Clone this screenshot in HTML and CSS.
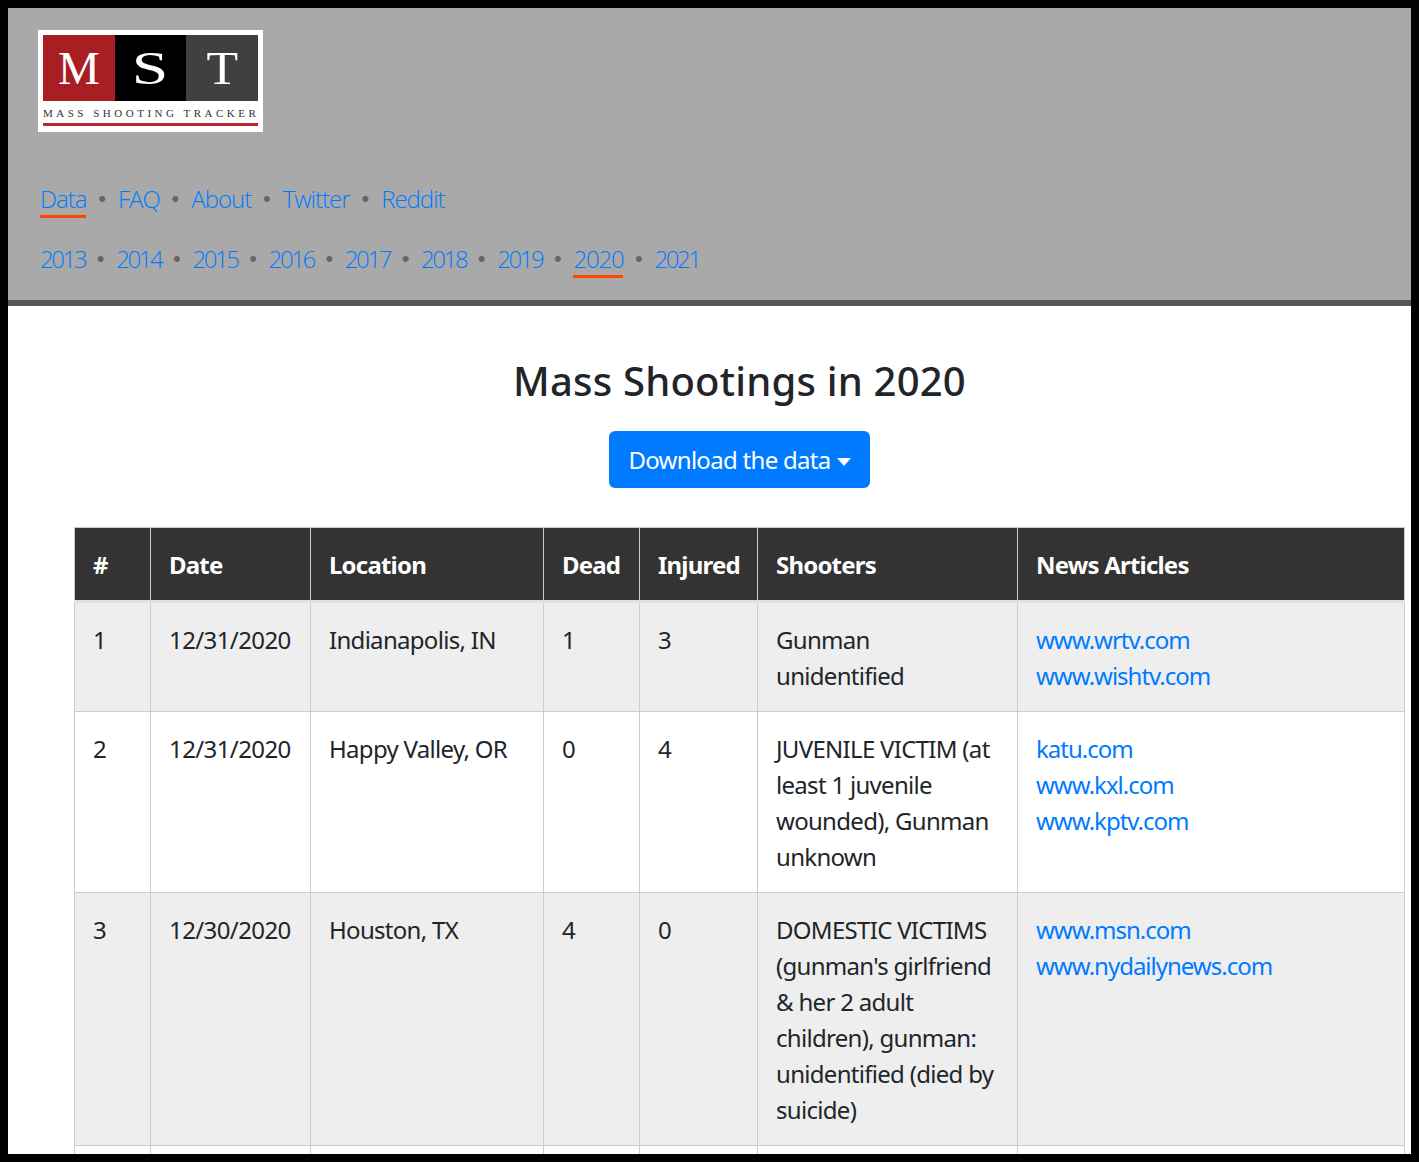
FILE: index.html
```html
<!DOCTYPE html>
<html>

<head>
    <meta charset="UTF-8">
    <title>Mass Shootings in 2020</title>
    <link rel="stylesheet" href="styles.css">
</head>

<body>
    <div class="frame">
        <header class="site-header">
            <div class="logo">
                <div class="logo-blocks">
                    <div class="logo-m"><span>M</span></div>
                    <div class="logo-s"><span>S</span></div>
                    <div class="logo-t"><span>T</span></div>
                </div>
                <div class="logo-name">MASS SHOOTING TRACKER</div>
                <div class="logo-rule"></div>
            </div>
            <nav class="nav-row nav-main">
                <a class="active" href="#">Data</a><i>•</i>
                <a href="#">FAQ</a><i>•</i>
                <a href="#">About</a><i>•</i>
                <a href="#">Twitter</a><i>•</i>
                <a href="#">Reddit</a>
            </nav>
            <nav class="nav-row nav-years">
                <a href="#">2013</a><i>•</i>
                <a href="#">2014</a><i>•</i>
                <a href="#">2015</a><i>•</i>
                <a href="#">2016</a><i>•</i>
                <a href="#">2017</a><i>•</i>
                <a href="#">2018</a><i>•</i>
                <a href="#">2019</a><i>•</i>
                <a class="active" href="#">2020</a><i>•</i>
                <a href="#">2021</a>
            </nav>
        </header>
        <main class="content">
            <h1>Mass Shootings in 2020</h1>
            <div class="download">
                <button class="btn-download">Download the data<span class="caret"></span></button>
            </div>
            <table class="shootings">
                <colgroup>
                    <col class="col-num">
                    <col class="col-date">
                    <col class="col-location">
                    <col class="col-dead">
                    <col class="col-injured">
                    <col class="col-shooters">
                    <col class="col-news">
                </colgroup>
                <thead>
                    <tr>
                        <th>#</th>
                        <th>Date</th>
                        <th>Location</th>
                        <th>Dead</th>
                        <th>Injured</th>
                        <th>Shooters</th>
                        <th>News Articles</th>
                    </tr>
                </thead>
                <tbody>
                    <tr>
                        <td>1</td>
                        <td>12/31/2020</td>
                        <td class="location">Indianapolis, IN</td>
                        <td>1</td>
                        <td>3</td>
                        <td class="shooters">Gunman unidentified</td>
                        <td class="news"><a href="#">www.wrtv.com</a><br><a href="#">www.wishtv.com</a></td>
                    </tr>
                    <tr>
                        <td>2</td>
                        <td>12/31/2020</td>
                        <td class="location">Happy Valley, OR</td>
                        <td>0</td>
                        <td>4</td>
                        <td class="shooters">JUVENILE VICTIM (at least 1 juvenile wounded), Gunman unknown</td>
                        <td class="news"><a href="#">katu.com</a><br><a href="#">www.kxl.com</a><br><a href="#">www.kptv.com</a></td>
                    </tr>
                    <tr>
                        <td>3</td>
                        <td>12/30/2020</td>
                        <td class="location">Houston, TX</td>
                        <td>4</td>
                        <td>0</td>
                        <td class="shooters">DOMESTIC VICTIMS (gunman's girlfriend &amp; her 2 adult children), gunman: unidentified (died by suicide)</td>
                        <td class="news"><a href="#">www.msn.com</a><br><a href="#">www.nydailynews.com</a></td>
                    </tr>
                    <tr>
                        <td></td>
                        <td></td>
                        <td></td>
                        <td></td>
                        <td></td>
                        <td></td>
                        <td></td>
                    </tr>
                </tbody>
            </table>
        </main>
    </div>
</body>

</html>
```

FILE: styles.css
```css
* {
    box-sizing: border-box;
}

body {
    margin: 0;
    font-family: "Noto Sans", sans-serif;
    font-size: 24px;
    line-height: 36px;
    color: #212529;
}

a {
    color: #007bff;
    text-decoration: none;
}

.frame {
    height: 1162px;
    border: 8px solid #000;
    overflow: hidden;
    background-color: #fff;
}

.site-header {
    height: 298px;
    padding: 22px 0 0 30px;
    background-color: #a9a9a9;
    border-bottom: 6px solid #555;
}

.logo {
    width: 225px;
    height: 102px;
    padding: 5px;
    background-color: #fff;
}

.logo-blocks {
    display: flex;
    height: 66px;
    font-family: "Liberation Serif", serif;
    font-size: 47px;
    line-height: 67px;
    color: #fff;
    text-align: center;
}

.logo-blocks div {
    flex: 1;
}

.logo-blocks span {
    display: inline-block;
}

.logo-m {
    background-color: #a91e23;
}

.logo-s {
    background-color: #000;
}

.logo-s span {
    transform: scaleX(1.4);
}

.logo-t {
    background-color: #404040;
}

.logo-t span {
    transform: scaleX(1.1);
}

.logo-name {
    margin-top: 5px;
    font-family: "Liberation Serif", serif;
    font-size: 11px;
    line-height: 15px;
    letter-spacing: 3.5px;
    white-space: nowrap;
    color: #333;
}

.logo-rule {
    height: 3px;
    margin-top: 2px;
    background-color: #b8282e;
}

.nav-row {
    display: flex;
    margin-left: 2px;
    height: 36px;
    font-family: "Open Sans", sans-serif;
    font-weight: 300;
}

.nav-main {
    margin-top: 49px;
}

.nav-years {
    margin-top: 24px;
}

.nav-row a {
    position: relative;
    letter-spacing: -1px;
}

.nav-years a {
    letter-spacing: -2.4px;
}

.nav-years a.active {
    letter-spacing: -1.2px;
}

.nav-row a.active::after {
    content: "";
    position: absolute;
    left: 0;
    right: 0;
    bottom: -1px;
    height: 3px;
    background-color: #ff4500;
}

.nav-row i {
    width: 31.5px;
    font-family: "Liberation Sans", sans-serif;
    font-style: normal;
    font-size: 22px;
    text-align: center;
    color: #666;
}

.nav-years i {
    width: 31px;
}

.content {
    padding: 0 6px 0 66px;
}

h1 {
    margin: 48px 0 0;
    font-size: 40px;
    line-height: 54px;
    font-weight: 500;
    letter-spacing: 0.2px;
    text-align: center;
}

.download {
    margin-top: 23px;
    text-align: center;
}

.btn-download {
    width: 261px;
    height: 57px;
    padding: 0;
    border: 0;
    border-radius: 6px;
    font-family: inherit;
    font-size: 24px;
    letter-spacing: -0.7px;
    color: #fff;
    background-color: #007bff;
}

.caret {
    display: inline-block;
    margin-left: 6px;
    vertical-align: 3px;
    border-top: 8px solid #fff;
    border-left: 7px solid transparent;
    border-right: 7px solid transparent;
}

.shootings {
    width: 1330px;
    margin-top: 39px;
    border-collapse: collapse;
    table-layout: fixed;
    letter-spacing: -0.6px;
}

.col-num {
    width: 76px;
}

.col-date {
    width: 160px;
}

.col-location {
    width: 233px;
}

.col-dead {
    width: 96px;
}

.col-injured {
    width: 118px;
}

.col-shooters {
    width: 260px;
}

.col-news {
    width: 387px;
}

.shootings th,
.shootings td {
    padding: 19px 18px 17px;
    border: 1px solid #ccc;
    text-align: left;
    vertical-align: top;
}

.shootings th {
    font-weight: 700;
    letter-spacing: -0.8px;
    vertical-align: bottom;
    color: #fff;
    background-color: #333;
    border-bottom: 3px solid #dee2e6;
}

.shootings .location {
    letter-spacing: -0.7px;
}

.shootings .shooters {
    letter-spacing: -0.7px;
}

.shootings .news {
    letter-spacing: -1px;
}

.shootings tbody tr:nth-child(odd) td {
    background-color: #eee;
}
```
